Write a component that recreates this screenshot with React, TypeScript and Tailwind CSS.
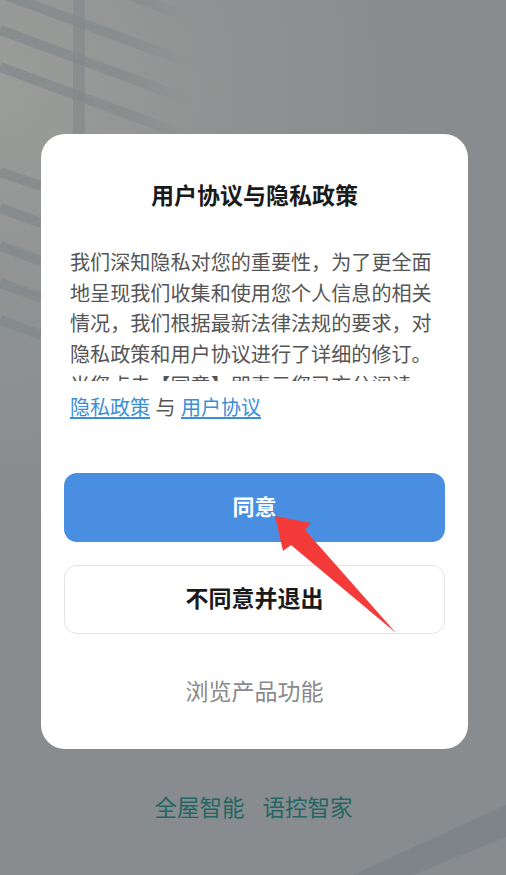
const CJK = 'font-["Liberation_Sans","Noto_Sans_CJK_SC",sans-serif]';

function Backdrop() {
  return (
    <svg className="absolute inset-0" width="506" height="875" viewBox="0 0 506 875">
      <defs>
        <radialGradient id="wall" gradientUnits="userSpaceOnUse" cx="0" cy="90" r="430">
          <stop offset="0" stopColor="#9b9d9a" />
          <stop offset="0.55" stopColor="#8f9292" />
          <stop offset="1" stopColor="#888c8e" />
        </radialGradient>
        <linearGradient id="stripe" gradientUnits="userSpaceOnUse" x1="0" y1="0" x2="195" y2="0">
          <stop offset="0" stopColor="#82878a" stopOpacity="0.75" />
          <stop offset="0.65" stopColor="#82878a" stopOpacity="0.6" />
          <stop offset="1" stopColor="#82878a" stopOpacity="0" />
        </linearGradient>
      </defs>
      <rect width="506" height="875" fill="url(#wall)" />
      <g fill="none" stroke="url(#stripe)" strokeWidth="10">
        <path d="M0 -7 L195 65" />
        <path d="M0 30 L195 102" />
        <path d="M0 67 L195 139" />
        <path d="M110 -12 L195 20" />
        <path d="M0 172 L41 186" />
        <path d="M0 208 L41 223" />
        <path d="M0 246 L41 261" />
        <path d="M0 283 L41 298" />
        <path d="M0 320 L41 335" />
      </g>
      <rect x="73" y="0" width="12" height="134" fill="#82878a" opacity="0.6" />
      <path d="M353 875 L506 805 L506 837 L413 875 Z" fill="#7e8287" opacity="0.85" />
    </svg>
  );
}

function PointerArrow() {
  return (
    <svg className="absolute inset-0 pointer-events-none" width="506" height="875" viewBox="0 0 506 875">
      <path d="M275 516 L311 523 L305 530 L396 633 L291 545 L283 551 Z" fill="#f53a3a" />
    </svg>
  );
}

export default function App() {
  return (
    <div className={`relative w-[506px] h-[875px] overflow-hidden ${CJK}`}>
      <Backdrop />
      <div className="relative flex flex-col w-[427px] ml-[41px] pt-[134px]">
        <div className="h-[615px] bg-white rounded-[24px] flex flex-col px-[23px]">
          <h1 className="mt-[47px] h-[30px] leading-[30px] text-center text-[23px] font-semibold text-[#1a1a1a]">
            用户协议与隐私政策
          </h1>
          <div className="mt-[37px] h-[133px] overflow-hidden px-[6px] text-[20.1px] leading-[30.7px] text-[#555555]">
            <p className="w-[368px]">
              我们深知隐私对您的重要性，为了更全面地呈现我们收集和使用您个人信息的相关情况，我们根据最新法律法规的要求，对隐私政策和用户协议进行了详细的修订。当您点击【同意】即表示您已充分阅读
            </p>
          </div>
          <div className="mt-[10px] h-[34px] px-[6px] text-[20px] leading-[34px] text-[#555555]">
            <a className="text-[#3b8fd6] underline underline-offset-2">隐私政策</a>
            <span className="mx-[5.5px]">与</span>
            <a className="text-[#3b8fd6] underline underline-offset-2">用户协议</a>
          </div>
          <button className="mt-[48px] h-[69px] shrink-0 rounded-[13px] bg-[#4a8ee2] text-white text-[22px] font-semibold">
            同意
          </button>
          <button className="mt-[23px] h-[69px] shrink-0 rounded-[13px] bg-white border border-[#e4e4e4] text-[#1a1a1a] text-[23px] font-bold">
            不同意并退出
          </button>
          <button className="mt-[41px] h-[34px] shrink-0 text-[23px] text-[#8a8a8a]">浏览产品功能</button>
        </div>
        <div className="mt-[43px] pr-[2px] flex justify-center gap-[18px] text-[22.5px] leading-[34px] text-[#236664]">
          <span>全屋智能</span>
          <span>语控智家</span>
        </div>
      </div>
      <PointerArrow />
    </div>
  );
}
